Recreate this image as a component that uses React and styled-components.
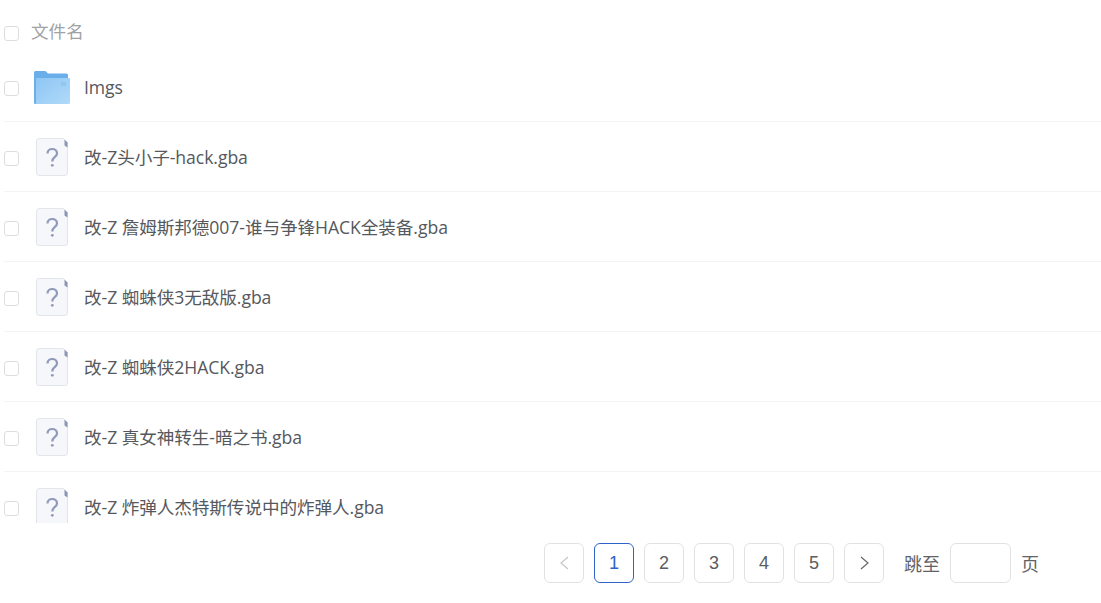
import { createGlobalStyle } from 'styled-components';
import styled from 'styled-components';

const GlobalStyle = createGlobalStyle`
    html, body {
        margin: 0;
        padding: 0;
        background: #fff;
    }
    body {
        font-family: "Open Sans", "Noto Sans CJK SC", sans-serif;
    }
`

const files = [
    "改-Z头小子-hack.gba",
    "改-Z 詹姆斯邦德007-谁与争锋HACK全装备.gba",
    "改-Z 蜘蛛侠3无敌版.gba",
    "改-Z 蜘蛛侠2HACK.gba",
    "改-Z 真女神转生-暗之书.gba",
    "改-Z 炸弹人杰特斯传说中的炸弹人.gba",
]

function FolderIcon() {
    return (
        <svg width="36" height="33" viewBox="0 0 36 33">
            <defs>
                <linearGradient id="front" x1="0" y1="0" x2="1" y2="1">
                    <stop offset="0" stopColor="#8ec6f4" />
                    <stop offset="1" stopColor="#b0daf9" />
                </linearGradient>
            </defs>
            <path d="M0 1.500Q0 0 1.500 0H11.500L14 2.500H32.500Q34 2.500 34 4V8H0Z" fill="#6aaeea" />
            <path d="M0 4H34V33H1.500Q0 33 0 31.500Z" fill="#6aaeea" />
            <path d="M2 7H35Q36 7 36 8V31.500Q36 33 34.500 33H2Z" fill="url(#front)" />
            <rect x="27" y="11.500" width="5" height="1" fill="#82bcec" />
            <rect x="27" y="13.500" width="5" height="1" fill="#82bcec" />
        </svg>
    )
}

function UnknownFileIcon() {
    return (
        <svg width="32" height="38" viewBox="0 0 32 38">
            <path d="M3 .5H27L31.500 4.500V35Q31.500 37.500 29 37.500H3Q.5 37.500 .5 35V3Q.5 .5 3 .5Z" fill="#f6f7fb" stroke="#e3e5ec" />
            <path d="M28.500 1.500L31.500 4.500V9.500L28.500 7.500Z" fill="#8d97b5" />
            <path d="M11.500 15.500C11.500 9.500 21 9.500 21 15.500C21 19 16.300 19 16.300 23.500" fill="none" stroke="#8f9abb" strokeWidth="2.200" />
            <circle cx="16.300" cy="27.300" r="1.400" fill="#8f9abb" />
        </svg>
    )
}

function Arrow({ direction, disabled }) {
    const d = direction === "left" ? "M9 1L2 7L9 13" : "M2 1L9 7L2 13"
    return (
        <svg width="11" height="14" viewBox="0 0 11 14">
            <path d={d} fill="none" stroke={disabled ? "#c4c6ca" : "#63666b"} strokeWidth="1.200" />
        </svg>
    )
}

export default function App() {
    return (
        <>
            <GlobalStyle />
            <Page>
                <Header>
                    <Checkbox />
                    <HeaderName>文件名</HeaderName>
                </Header>
                <List>
                    <Row>
                        <Checkbox />
                        <IconBox><FolderIcon /></IconBox>
                        <FileName>Imgs</FileName>
                    </Row>
                    {files.map((file) => (
                        <Row key={file}>
                            <Checkbox />
                            <IconBox><UnknownFileIcon /></IconBox>
                            <FileName>{file}</FileName>
                        </Row>
                    ))}
                </List>
                <Pagination>
                    <PageButton disabled><Arrow direction="left" disabled /></PageButton>
                    <PageButton active>1</PageButton>
                    <PageButton>2</PageButton>
                    <PageButton>3</PageButton>
                    <PageButton>4</PageButton>
                    <PageButton>5</PageButton>
                    <PageButton><Arrow direction="right" /></PageButton>
                    <JumpLabel>跳至</JumpLabel>
                    <JumpInput />
                    <PageLabel>页</PageLabel>
                </Pagination>
            </Page>
        </>
    )
}

const Page = styled.div`
    width: 1101px;
    height: 603px;
    overflow: hidden;
    background: #fff;
`
const Header = styled.div`
    display: flex;
    align-items: center;
    height: 53px;
    padding: 10px 0 0 4px;
    box-sizing: border-box;
`
const HeaderName = styled.span`
    margin: 0 0 2px 12px;
    font-size: 17.6px;
    color: #a0a2a6;
`
const List = styled.div`
    height: 470px;
    overflow: hidden;
`
const Row = styled.div`
    display: flex;
    align-items: center;
    height: 70px;
    margin-left: 4px;
    padding-bottom: 1px;
    box-sizing: border-box;
    border-bottom: 1px solid #f3f4f5;
    &:first-child {
        height: 69px;
    }
`
const Checkbox = styled.span`
    display: block;
    flex: none;
    width: 13px;
    height: 13px;
    margin-top: 4px;
    border: 1px solid #dcdee1;
    border-radius: 3px;
    background: #fff;
`
const IconBox = styled.div`
    display: flex;
    align-items: center;
    justify-content: center;
    width: 38px;
    margin: 2px 0 0 14px;
`
const FileName = styled.span`
    margin-left: 13px;
    font-size: 17.6px;
    letter-spacing: -0.06px;
    color: #55585d;
    white-space: nowrap;
`
const Pagination = styled.div`
    display: flex;
    align-items: center;
    margin-top: 20px;
    padding-left: 544px;
    gap: 10px;
`
const PageButton = styled.button`
    display: flex;
    align-items: center;
    justify-content: center;
    width: 40px;
    height: 40px;
    padding: 0;
    background: #fff;
    border: 1px solid ${props => props.active ? "#2f63c9" : "#e1e2e4"};
    border-radius: 6px;
    font-family: "Liberation Sans", sans-serif;
    font-size: 18px;
    color: ${props => props.active ? "#2f63c9" : "#5a5d62"};
`
const JumpLabel = styled.span`
    margin-left: 10px;
    font-size: 18px;
    color: #5f6267;
`
const JumpInput = styled.input`
    width: 61px;
    height: 40px;
    padding: 0;
    box-sizing: border-box;
    border: 1px solid #e1e2e4;
    border-radius: 6px;
    background: #fff;
`
const PageLabel = styled.span`
    font-size: 18px;
    color: #5f6267;
`
